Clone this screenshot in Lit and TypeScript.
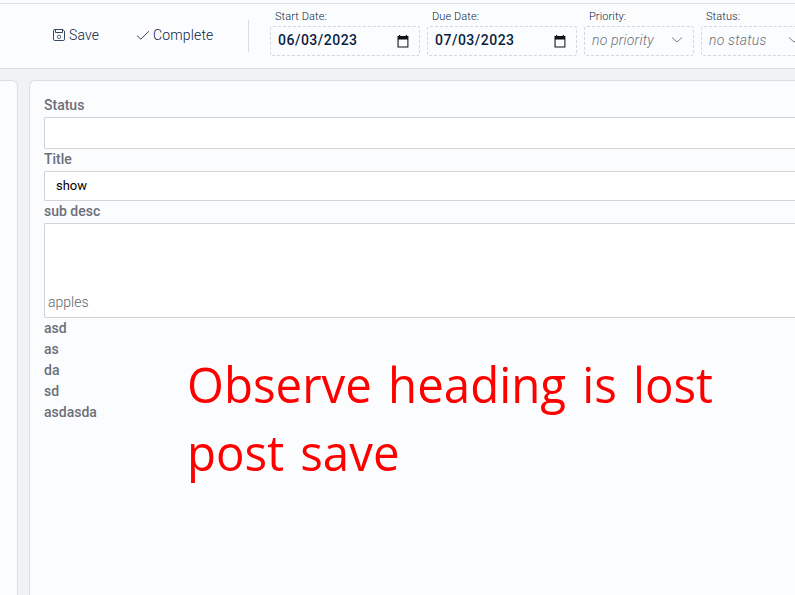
import { LitElement, html, css } from "lit";
import { customElement } from "lit/decorators.js";

const saveIcon = html`<svg class="ico" width="14" height="14" viewBox="0 0 14 14" fill="none" stroke="#3a4862" stroke-width="1">
  <path d="M3 1.5H10.8L12.5 3.2V11.2Q12.5 12.5 11.2 12.5H2.8Q1.5 12.5 1.5 11.2V2.8Q1.5 1.5 3 1.5Z"/>
  <path d="M3.5 1.5V4.5H10.5V1.5"/><rect x="5.5" y="7.4" width="3" height="3" rx="1"/></svg>`;
const checkIcon = html`<svg class="ico" width="14" height="14" viewBox="0 0 14 14" fill="none" stroke="#3a4862" stroke-width="1">
  <path d="M1 7.6L4.8 11.2L13 3.2"/></svg>`;
const calendarIcon = html`<svg class="cal" width="12" height="13" viewBox="0 0 12 13">
  <path fill="#111" d="M2 0H3.2V1H8.8V0H10V1H11.4V12.6H.5V1H2ZM1.6 4.4V11.4H10.4V4.4Z" fill-rule="evenodd"/></svg>`;
const chevron = html`<svg class="chev" width="12" height="8" viewBox="0 0 12 8" fill="none" stroke="#7b8189" stroke-width="1">
  <path d="M1 1.5L6 6L11 1.5"/></svg>`;

@customElement("app-root")
export class AppRoot extends LitElement {
  static styles = css`
    :host { display: block; position: relative; width: 795px; height: 595px; overflow: hidden;
      background: #f1f2f4; font-family: Roboto, "Liberation Sans", sans-serif; color: #091e42; }
    * { box-sizing: border-box; }
    .page { display: flex; flex-direction: column; height: 100%; }
    .toolbar { display: flex; flex: none; height: 69px; padding-left: 52px;
      border-top: 3px solid #fbfcfe; border-bottom: 1px solid #dcdde0; background: #fbfcfe;
      box-shadow: inset 0 1px #dcdde0; white-space: nowrap; }
    .toolbar > * { flex: none; }
    .action { display: flex; align-items: center; height: 20px; margin-top: 22px; gap: 3px;
      font-size: 14px; font-weight: 300; letter-spacing: .15px; line-height: 20px; }
    .save { width: 84px; }
    .complete { width: 112px; }
    .ico { flex: none; }
    .rule { width: 1px; height: 32px; margin: 17px 21px 0 0; background: #dcdde0; }
    .fields { display: flex; gap: 7px; padding-top: 5px; }
    .field { display: flex; flex-direction: column; width: 150px; flex: none; }
    .field.pick { width: 110px; }
    .caption { height: 18px; padding-left: 5px; font-size: 11px; font-weight: 300; line-height: 17px; letter-spacing: .1px; }
    .box { display: flex; align-items: center; justify-content: space-between;
      height: 30px; padding: 0 10px 2px 7px; border: 1px dashed #d4d6da; border-radius: 3px;
      font-size: 14px; font-weight: 500; letter-spacing: .5px; }
    .cal { position: relative; top: 1px; }
    .pick .box { font-weight: 300; font-style: italic; color: #6b7078; letter-spacing: .2px; }
    .workspace { display: flex; flex: 1; gap: 11px; padding-top: 11px; min-height: 0; }
    .side, .main { border: 1px solid #dcdde0; border-bottom: 0; background: #fbfcfe; }
    .side { width: 18px; flex: none; border-left: 0; border-radius: 0 6px 0 0; }
    .main { width: 766px; flex: none; border-right: 0; border-radius: 6px 0 0 0; padding: 14px 0 0 14px; }
    .label { height: 22px; font-size: 14px; font-weight: 500; line-height: 20px; color: #6b7078; }
    .input { border: 1px solid #d2d3d6; border-right: 0; border-radius: 2px 0 0 2px; background: #fff; height: 32px; }
    .title { height: 30px; padding-left: 11px; font-size: 13px; line-height: 28px; color: #000; }
    .desc { height: 95px; padding: 68px 0 0 3px; font-size: 14px; font-weight: 300; line-height: 20px; color: #60656c; }
    .line { height: 21px; font-size: 14px; font-weight: 500; line-height: 20px; color: #6b7078; }
    .note { position: absolute; left: 187px; top: 350px; font: 49px/68px "Open Sans", sans-serif; word-spacing: 4px;
      color: #f00; white-space: nowrap; transform: scaleX(.968); transform-origin: 0 0; }
  `;

  private field(label: string, value: string, kind: string) {
    return html`<div class="field ${kind}"><div class="caption">${label}</div>
      <div class="box"><span>${value}</span>${kind === "pick" ? chevron : calendarIcon}</div></div>`;
  }

  render() {
    return html`<div class="page">
      <div class="toolbar">
        <div class="action save">${saveIcon}<span>Save</span></div>
        <div class="action complete">${checkIcon}<span>Complete</span></div>
        <div class="rule"></div>
        <div class="fields">
          ${this.field("Start Date:", "06/03/2023", "date")}
          ${this.field("Due Date:", "07/03/2023", "date")}
          ${this.field("Priority:", "no priority", "pick")}
          ${this.field("Status:", "no status", "pick")}
        </div>
      </div>
      <div class="workspace">
        <div class="side"></div>
        <div class="main">
          <div class="label">Status</div><div class="input"></div>
          <div class="label">Title</div><div class="input title">show</div>
          <div class="label">sub desc</div><div class="input desc">apples</div>
          ${["asd", "as", "da", "sd", "asdasda"].map((t) => html`<div class="line">${t}</div>`)}
        </div>
      </div>
    </div>
    <div class="note"><div>Observe heading is lost</div><div>post save</div></div>`;
  }
}
